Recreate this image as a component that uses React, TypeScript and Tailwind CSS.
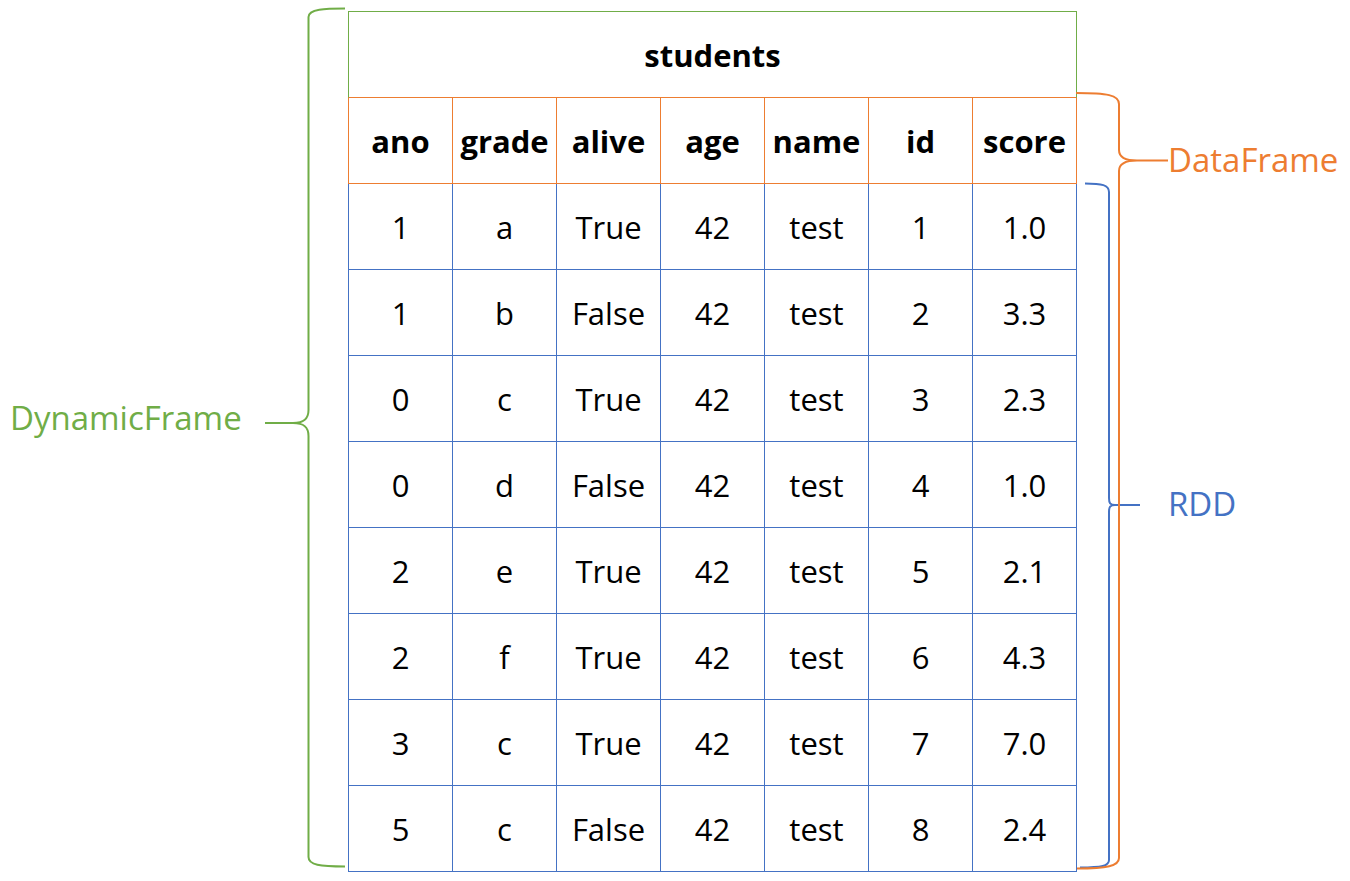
import React from 'react'

const cols = ['ano', 'grade', 'alive', 'age', 'name', 'id', 'score']
const rows = [
  ['1', 'a', 'True', '42', 'test', '1', '1.0'],
  ['1', 'b', 'False', '42', 'test', '2', '3.3'],
  ['0', 'c', 'True', '42', 'test', '3', '2.3'],
  ['0', 'd', 'False', '42', 'test', '4', '1.0'],
  ['2', 'e', 'True', '42', 'test', '5', '2.1'],
  ['2', 'f', 'True', '42', 'test', '6', '4.3'],
  ['3', 'c', 'True', '42', 'test', '7', '7.0'],
  ['5', 'c', 'False', '42', 'test', '8', '2.4'],
]

function LeftBrace() {
  return (
    <svg width="83" height="881" viewBox="0 0 83 881" className="overflow-visible shrink-0">
      <path
        d="M80 8.5 C60 8.5 43.5 9 43.5 17 L43.5 410 C43.5 419 39 423 28 423 L0 423 M28 423 C39 423 43.5 427 43.5 436 L43.5 857 C43.5 865 55 866.5 80 866.5"
        fill="none" stroke="#70AD47" strokeWidth="2"
      />
    </svg>
  )
}

function RightBraces() {
  return (
    <svg width="93" height="881" viewBox="0 0 93 881" className="overflow-visible shrink-0">
      {/* RDD brace */}
      <path
        d="M8 183.5 C25 183.5 32 185 32 192 L32 498 C32 503 33 505 38 505 L63 505 M38 505 C33 505 32 507 32 512 L32 860 C32 866 25 867.5 3 867.5"
        fill="none" stroke="#4472C4" strokeWidth="2"
      />
      {/* DataFrame brace */}
      <path
        d="M-1 93 C30 93 42 95 42 104 L42 150 C42 157 48 160.5 60 160.5 L91 160.5 M60 160.5 C48 160.5 42 164 42 171 L42 858 C42 866 30 868.5 0 868.5"
        fill="none" stroke="#ED7D31" strokeWidth="2"
      />
    </svg>
  )
}

export default function App() {
  return (
    <div className="w-[1350px] h-[881px] bg-white flex overflow-hidden text-black" style={{ fontFamily: '"Open Sans", "Liberation Sans", sans-serif' }}>
      {/* left label */}
      <div className="w-[265px] shrink-0 pl-[10px] pt-[397px]">
        <div className="text-[33px] leading-[42px] text-[#70AD47]">DynamicFrame</div>
      </div>
      <LeftBrace />

      {/* table */}
      <div className="w-[729px] shrink-0 mt-[11px] self-start text-[31px]">
        <div className="h-[87px] pt-[2px] border border-[#70AD47] border-b-[#ED7D31] flex items-center justify-center font-bold">
          students
        </div>
        <div className="flex h-[86px] border-l border-b border-[#ED7D31]">
          {cols.map((c) => (
            <div key={c} className="w-[104px] pt-[2px] border-r border-[#ED7D31] flex items-center justify-center font-bold">{c}</div>
          ))}
        </div>
        {rows.map((r, i) => (
          <div key={i} className="flex h-[86px] border-l border-b border-[#4472C4]">
            {r.map((v, j) => (
              <div key={j} className="w-[104px] pt-[2px] border-r border-[#4472C4] flex items-center justify-center">{v}</div>
            ))}
          </div>
        ))}
      </div>

      <RightBraces />
      {/* right labels */}
      <div className="flex flex-col -ml-[2px]">
        <div className="pt-[139px] text-[33px] leading-[42px] text-[#ED7D31]">DataFrame</div>
        <div className="pt-[302px] text-[33px] leading-[42px] text-[#4472C4]">RDD</div>
      </div>
    </div>
  )
}
